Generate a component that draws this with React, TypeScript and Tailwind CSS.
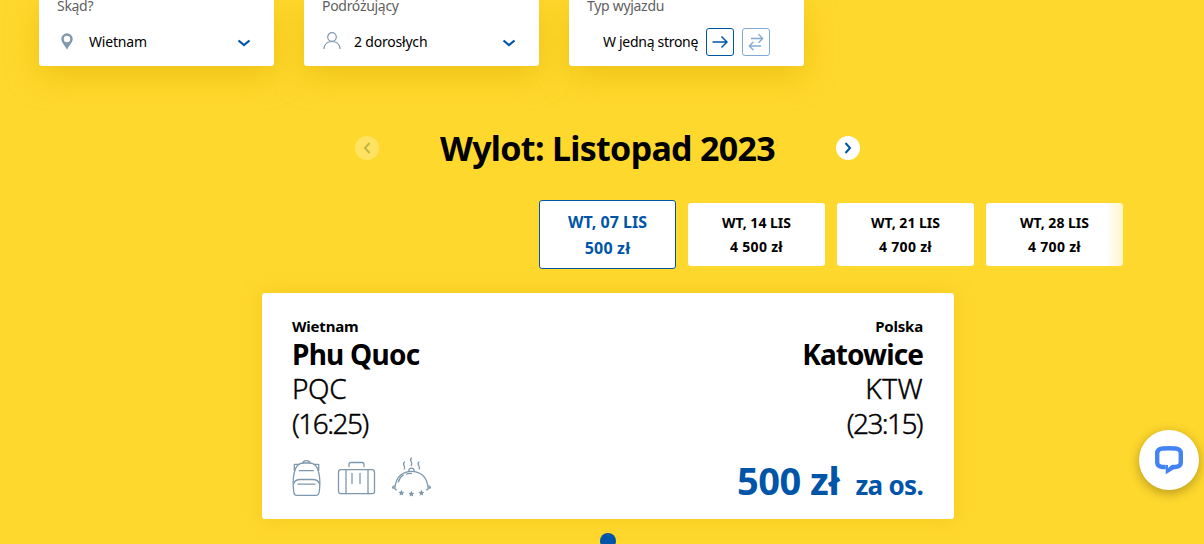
import { ReactNode } from 'react'
import clsx from 'clsx'

const dates = [
  { day: 'WT, 07 LIS', price: '500 zł', active: true },
  { day: 'WT, 14 LIS', price: '4 500 zł', active: false },
  { day: 'WT, 21 LIS', price: '4 700 zł', active: false },
  { day: 'WT, 28 LIS', price: '4 700 zł', active: false },
]

function FilterCard({ label, children }: { label: string; children: ReactNode }) {
  return (
    <div className="flex h-[66px] w-[235px] flex-col rounded-b-[3px] bg-white px-[18px] shadow-[0_10px_30px_rgba(222,176,0,0.55)]">
      <span className="h-[15px] text-[14px] leading-[12px] tracking-[-0.3px] text-[#5f5f5f]">{label}</span>
      <div className="mt-[13px] flex h-7 items-center text-[14px] tracking-[-0.2px] text-black">{children}</div>
    </div>
  )
}

function SelectChevron() {
  return (
    <svg className="mt-px mr-[5px] ml-auto" width="14" height="8" viewBox="0 0 14 8" fill="none" stroke="#0055a8" strokeWidth="2.2">
      <path d="M1.500 1.500 7 6l5.500-4.500" />
    </svg>
  )
}

function PinIcon() {
  return (
    <svg width="12" height="17" viewBox="0 0 12 17" className="mr-4 mb-0.5 ml-1 shrink-0">
      <path
        fill="#8199ad"
        fillRule="evenodd"
        d="M6 .3A5.700 5.700 0 0 0 .3 6C.3 9.600 3.800 12.300 6 16.700 8.200 12.300 11.700 9.600 11.700 6A5.700 5.700 0 0 0 6 .3Zm0 2.500a3.200 3.200 0 1 1 0 6.400A3.200 3.200 0 0 1 6 2.800Z"
      />
    </svg>
  )
}

function PersonIcon() {
  return (
    <svg width="18" height="18" viewBox="0 0 18 18" fill="none" stroke="#8199ad" strokeWidth="1.2" className="mr-[13px] mb-0.5 ml-px">
      <circle cx="9" cy="5" r="4.300" />
      <path d="M1 17c.2-4.700 3.500-7.500 8-7.500s7.800 2.800 8 7.500" />
    </svg>
  )
}

function BackpackIcon() {
  return (
    <svg width="30" height="40" viewBox="0 0 30 40" fill="none" stroke="#7d98ad" strokeWidth="1.300" strokeLinecap="round" strokeLinejoin="round" className="mt-px">
      <path d="M4.500 38.300h20c2 0 2.500-1.300 2.800-4 .7-6 .9-13-.5-18.300C25.500 9 22 6 17.500 6h-6C7 6 3.500 9 2.200 16 .8 21.300 1 28.300 1.700 34.300c.3 2.700.8 4 2.800 4Z" />
      <path d="M11 5.800C11.200 2.800 17.600 2.800 17.800 5.800M2.300 13.500V7.300h5M26.700 13.500V7.300h-5" />
      <path d="M1.500 27c.8-3.200 3-4.500 7-4.500h12c4 0 6.200 1.300 7 4.500M7.300 13.700h14M6 27.200h17" />
    </svg>
  )
}

function SuitcaseIcon() {
  return (
    <svg width="40" height="40" viewBox="0 0 40 40" fill="none" stroke="#7d98ad" strokeWidth="1.300" strokeLinecap="round" className="mt-px">
      <rect x="1.500" y="12.700" width="36" height="24" rx="2.500" />
      <path d="M9 12.700v24M31 12.700v24M15 16.500v10M23 16.500v10" />
      <path d="M12 9.500V7.500a2 2 0 0 1 2-2h11a2 2 0 0 1 2 2v2" />
    </svg>
  )
}

function MealIcon() {
  return (
    <svg width="40" height="40" viewBox="0 0 40 40" fill="none" stroke="#7d98ad" strokeWidth="1.300" strokeLinecap="round" strokeLinejoin="round" className="mt-px">
      <path d="M3.200 29C4.500 19.500 11 14.300 19.500 14.300S34.500 19.500 35.800 29" />
      <path d="M3.200 29c-1.500-.2-2.500.5-2.600 1.800 1 .4 1.800.2 2.400-.2-.4 1.300.2 2.200 1.400 2.300M35.800 29c1.500-.2 2.500.5 2.600 1.800-1 .4-1.800.2-2.400-.2.4 1.300-.2 2.200-1.400 2.300" />
      <path d="M16.800 14c0-3.800 5.400-3.800 5.400 0M6.300 25c1-3.500 2.500-5.500 5-7M14.500 17c1.500-.5 3.200-.6 5-.5" />
      <path d="M12.500 5c-3 2.500 1.500 4-.2 7M19.500 1c-3 2.500 2 4.200-.3 7.500M26.900 5c-3 2.500 2 4.500.3 7" />
      <g fill="#7d98ad" stroke="none">
        <path id="star" d="m9.400 32.800.9 2 2 .2-1.500 1.400.4 2-1.800-1-1.800 1 .4-2L6.500 35l2-.2Z" />
        <use href="#star" x="10" y="1" />
        <use href="#star" x="20" />
      </g>
    </svg>
  )
}

export default function App() {
  return (
    <div className="relative flex h-[544px] w-[1204px] flex-col overflow-hidden bg-[#ffd82d] font-['Noto_Sans',sans-serif] text-black">
      {/* Filters */}
      <div className="flex gap-[30px] pl-[39px]">
        <FilterCard label="Skąd?">
          <PinIcon />
          <span className="mb-0.5">Wietnam</span>
          <SelectChevron />
        </FilterCard>
        <FilterCard label="Podróżujący">
          <PersonIcon />
          <span className="mb-0.5">2 dorosłych</span>
          <SelectChevron />
        </FilterCard>
        <FilterCard label="Typ wyjazdu">
          <span className="mb-0.5 w-[103px] pl-4 tracking-[-0.3px] whitespace-nowrap">W jedną stronę</span>
          <button className="ml-4 flex size-7 shrink-0 items-center justify-center rounded-[3px] border border-[#0055a8]">
            <svg width="16" height="14" viewBox="0 0 16 14" fill="none" stroke="#0055a8" strokeWidth="1.500">
              <path d="M.5 7H15M9.500 1.500 15 7l-5.500 5.500" />
            </svg>
          </button>
          <button className="ml-2 flex size-7 shrink-0 items-center justify-center rounded-[3px] border border-[#80aad4]">
            <svg width="16" height="18" viewBox="0 0 16 18" fill="none" stroke="#80aad4" strokeWidth="1.300">
              <path d="M3 5.500h11.500M10.500 1.300l4.200 4.200-4.200 4.200M13 13H1.500M5.500 8.800 1.300 13l4.200 4.200" />
            </svg>
          </button>
        </FilterCard>
      </div>

      {/* Month */}
      <div className="mt-[58px] ml-[355px] flex h-12 w-[505px] items-center justify-between">
        <button className="flex size-6 items-center justify-center rounded-full bg-white/25">
          <svg width="8" height="12" viewBox="0 0 8 12" fill="none" stroke="#c0b845" strokeWidth="2">
            <path d="M6.500 1 2 6l4.500 5" />
          </svg>
        </button>
        <h2 className="text-[34px] leading-[48px] font-bold tracking-[-0.7px] whitespace-nowrap">Wylot: Listopad 2023</h2>
        <button className="flex size-6 items-center justify-center rounded-full bg-white">
          <svg width="8" height="12" viewBox="0 0 8 12" fill="none" stroke="#0055a8" strokeWidth="2">
            <path d="M1.500 1 6 6l-4.500 5" />
          </svg>
        </button>
      </div>

      {/* Dates */}
      <div className="relative mt-7 ml-[539px] flex h-[69px] w-[584px] items-center gap-3">
        {dates.map((date) => (
          <div
            key={date.day}
            className={clsx(
              'flex w-[137px] shrink-0 flex-col items-center justify-center rounded-[3px] bg-white font-bold',
              date.active ? 'h-[69px] border border-[#0055a8] text-[16px] leading-[26px] text-[#0055a8]' : 'h-[63px] text-[14px] leading-6',
            )}
          >
            <span>{date.day}</span>
            <span className={date.active ? 'tracking-[0.2px]' : 'tracking-[0.3px]'}>{date.price}</span>
          </div>
        ))}
        <div className="absolute top-0 right-0 h-full w-[18px] bg-gradient-to-r from-[#ffd82d]/0 to-[#ffd82d]/25" />
      </div>

      {/* Flight */}
      <div className="mt-6 ml-[262px] h-[226px] w-[692px] shrink-0 rounded-[3px] bg-white px-[30px] pt-[22px] shadow-[0_0_20px_rgba(222,176,0,0.35)]">
        <div className="flex justify-between">
          <div>
            <p className="text-[15px] leading-[22px] font-bold tracking-[-0.2px]">Wietnam</p>
            <p className="text-[28px] leading-[34px] font-bold tracking-[-0.75px]">Phu Quoc</p>
            <p className="text-[28px] leading-[35px] font-light tracking-[-0.4px] [-webkit-text-stroke:0.4px]">PQC</p>
            <p className="text-[28px] leading-[35px] font-light tracking-[-1.5px] [-webkit-text-stroke:0.4px]">(16:25)</p>
          </div>
          <div className="pr-px text-right">
            <p className="text-[15px] leading-[22px] font-bold tracking-[-0.2px]">Polska</p>
            <p className="text-[28px] leading-[34px] font-bold tracking-[-0.9px]">Katowice</p>
            <p className="text-[28px] leading-[35px] font-light tracking-[0.4px] [-webkit-text-stroke:0.4px]">KTW</p>
            <p className="pr-px text-[28px] leading-[35px] font-light tracking-[-1.6px] [-webkit-text-stroke:0.4px]">(23:15)</p>
          </div>
        </div>
        <div className="mt-[15px] flex h-12 justify-between">
          <div className="flex gap-[15px]">
            <BackpackIcon />
            <SuitcaseIcon />
            <MealIcon />
          </div>
          <div className="flex items-baseline gap-[16px] pr-px font-bold text-[#0055a8]">
            <span className="text-[38px] leading-[48px] tracking-[-0.5px]">500 zł</span>
            <span className="text-[26px] leading-[48px] tracking-[-0.7px]">za os.</span>
          </div>
        </div>
      </div>

      <div className="mt-[14px] ml-[600px] size-4 shrink-0 rounded-full bg-[#0055a8]" />

      <button className="absolute top-[430px] left-[1139px] flex size-[60px] items-center justify-center rounded-full bg-white shadow-[0_3px_12px_rgba(0,0,0,0.3)]">
        <svg width="28" height="29" viewBox="0 0 28 29" fill="none" stroke="#4384f5" strokeWidth="4.400" className="mt-px">
          <path d="M10.700 21H7.500Q2.200 20.600 2.200 16.500V7.500Q2.200 3 7.500 2.500Q14 2 20.500 2.500Q25.800 3 25.800 7.500v9q0 4.100-5.300 4.500H17" />
          <path d="M10.700 19v9.300l8.300-5.100V19h-2.500l-3.500 3v-3Z" fill="#4384f5" stroke="none" />
        </svg>
      </button>
    </div>
  )
}
